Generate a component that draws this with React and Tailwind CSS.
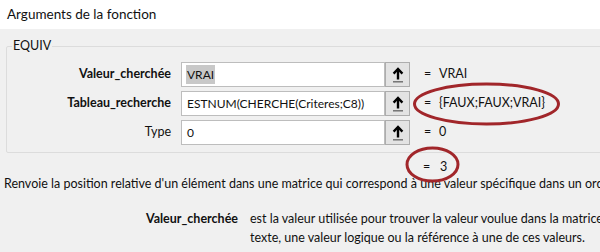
const FONT = { fontFamily: 'Lato, "Open Sans", sans-serif' };

function ArrowIcon() {
  return (
    <svg width="12" height="16" viewBox="0 0 12 16">
      <path d="M6 2.5 L6 12.5" stroke="#000" strokeWidth="2.4" />
      <path d="M1.6 6.6 L6 2 L10.4 6.6" stroke="#000" strokeWidth="2.4" fill="none" />
      <path d="M1 14.8 L11 14.8" stroke="#6b6b6b" strokeWidth="1.4" />
    </svg>
  );
}

const ARGS = [
  { label: 'Valeur_cherchée', bold: true, value: 'VRAI', result: 'VRAI', selected: true },
  { label: 'Tableau_recherche', bold: true, value: 'ESTNUM(CHERCHE(Criteres;C8))', result: '{FAUX;FAUX;VRAI}' },
  { label: 'Type', bold: false, value: '0', result: '0' },
];

function ArgRow({ arg }) {
  return (
    <div className="flex items-center h-[25px]">
      <div className={`shrink-0 w-[164px] text-right text-[12.5px] ${arg.bold ? 'font-bold' : ''}`}>{arg.label}</div>
      <div className="shrink-0 ml-[10px] w-[204px] h-[25px] bg-white border border-[#bdbdbd] flex items-center pl-[4px] text-[12px] whitespace-nowrap overflow-hidden">
        {arg.selected ? (
          <span className="bg-[#c8c8c8] px-[1px] leading-[19px]">{arg.value}</span>
        ) : (
          <span className="px-[1px]">{arg.value}</span>
        )}
      </div>
      <div className="shrink-0 w-[25px] h-[25px] border border-[#adadad] bg-[#e3e3e3] flex items-center justify-center">
        <ArrowIcon />
      </div>
      <div className="shrink-0 ml-[14px] w-[15px] text-[12.5px]">=</div>
      <div className="text-[12.5px] whitespace-nowrap">{arg.result}</div>
    </div>
  );
}

export default function App() {
  return (
    <div className="relative w-[600px] h-[252px] bg-[#f0f0f0] overflow-hidden text-[#111]" style={FONT}>
      <div className="h-[29px] bg-white flex items-center pl-[7px] text-[13.5px]">Arguments de la fonction</div>

      <fieldset className="ml-[6px] mt-[9px] w-[640px] h-[115px] border border-[#dcdcdc] rounded-[2px] p-0">
        <legend className="ml-[5px] px-[1px] text-[12.5px] leading-[16px]">EQUIV</legend>
        <div className="mt-[8px] flex flex-col gap-[4px]">
          {ARGS.map((arg) => (
            <ArgRow key={arg.label} arg={arg} />
          ))}
        </div>
      </fieldset>

      <div className="mt-[5px] flex text-[12.5px] leading-[17px]">
        <div className="ml-[423px] w-[17px]">=</div>
        <div>3</div>
      </div>

      <div className="pl-[4px] text-[12.5px] leading-[17px] whitespace-nowrap">
        Renvoie la position relative d'un élément dans une matrice qui correspond à une valeur spécifique dans un ordre spécifique.
      </div>

      <div className="mt-[17px] flex text-[12.5px] leading-[19px] whitespace-nowrap">
        <div className="shrink-0 w-[238px] text-right font-bold">Valeur_cherchée</div>
        <div className="shrink-0 ml-[12px]">
          est la valeur utilisée pour trouver la valeur voulue dans la matrice, un nombre, du
          <br />
          texte, une valeur logique ou la référence à une de ces valeurs.
        </div>
      </div>

      <svg className="absolute left-0 top-0 pointer-events-none" width="600" height="252">
        <ellipse cx="486.5" cy="104" rx="72" ry="20" fill="none" stroke="#a1262a" strokeWidth="3" />
        <ellipse cx="432.5" cy="164.5" rx="25.5" ry="16.5" fill="none" stroke="#a1262a" strokeWidth="3" />
      </svg>
    </div>
  );
}
